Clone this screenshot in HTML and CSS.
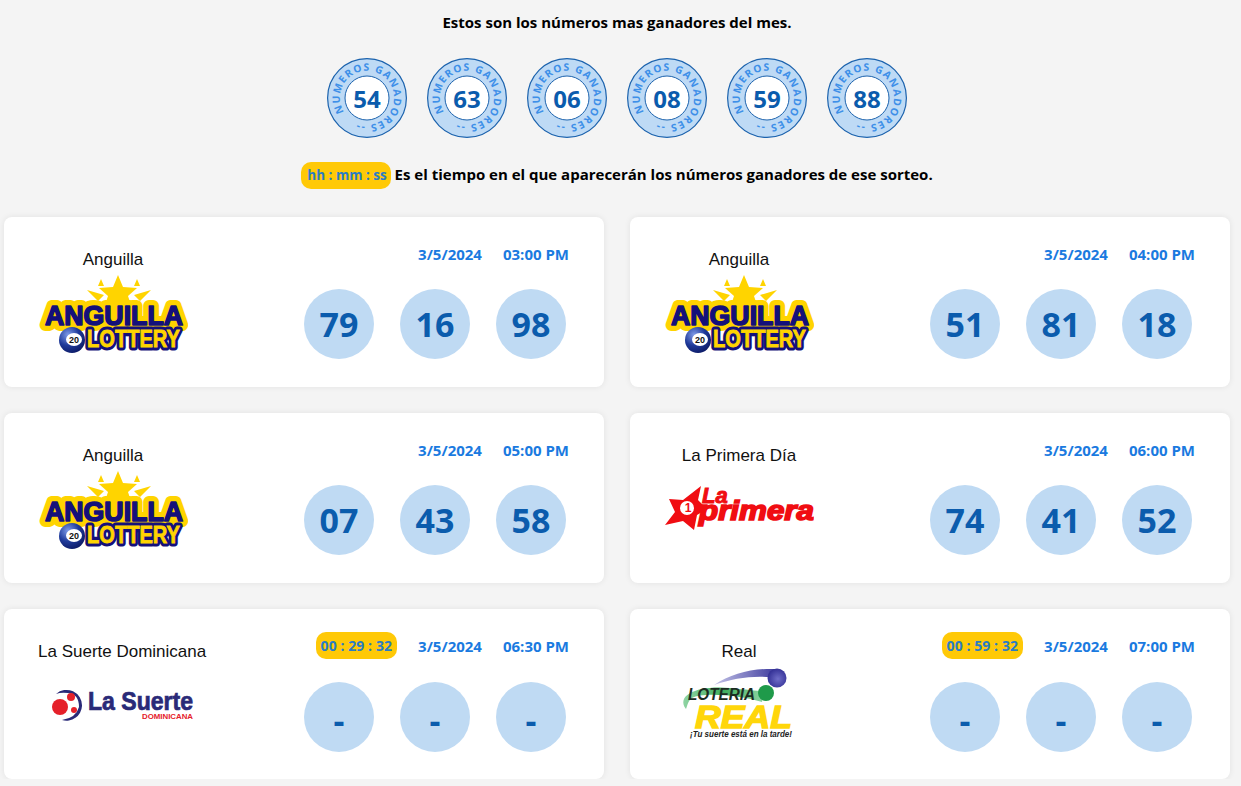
FILE: index.html
```html
<!DOCTYPE html>
<html lang="es">
<head>
    <meta charset="UTF-8">
    <meta name="viewport" content="width=device-width, initial-scale=1.0">
    <title>Números ganadores</title>
    <link rel="stylesheet" href="styles.css">
</head>
<body>
    <svg class="sprite" aria-hidden="true">
        <defs>
            <radialGradient id="ball-blue" cx="35%" cy="30%" r="75%">
                <stop offset="0" stop-color="#7f9be8"/>
                <stop offset="0.55" stop-color="#1f3a9a"/>
                <stop offset="1" stop-color="#0c1a66"/>
            </radialGradient>
            <radialGradient id="ball-real" cx="55%" cy="55%" r="60%">
                <stop offset="0" stop-color="#6f6dc8"/>
                <stop offset="1" stop-color="#2f2c92"/>
            </radialGradient>
            <linearGradient id="swoosh-blue" x1="0" x2="1" y1="0" y2="0">
                <stop offset="0" stop-color="#c4c4e8"/>
                <stop offset="1" stop-color="#37349a"/>
            </linearGradient>
            <linearGradient id="swoosh-green" x1="0" x2="1" y1="0" y2="0">
                <stop offset="0" stop-color="#8fd4a3"/>
                <stop offset="0.5" stop-color="#3fae5e"/>
                <stop offset="1" stop-color="#8fd4a3"/>
            </linearGradient>
            <path id="ring-path" d="M 17 54 A 27 27 0 1 1 21 59"/>
            <symbol id="seal" viewBox="0 0 80 80">
                <circle cx="40" cy="40" r="39.4" fill="#bedaf5" stroke="#1b62ad" stroke-width="1.2"/>
                <circle cx="40" cy="40" r="22" fill="#fff" stroke="#1b62ad" stroke-width="1"/>
                <text class="seal-text"><textPath href="#ring-path">NUMEROS GANADORES --</textPath></text>
            </symbol>
            <symbol id="logo-anguilla" viewBox="0 0 150 78">
                <path d="M80 0l5 12 14 1-9 8 3 9H67l3-9-9-8 14-1z" fill="#ffd400"/>
                <path d="M63 4l3 7h-6zM99 4l3 7h-6zM49 15l17 5-6 6zM113 15l-17 5 6 6z" fill="#ffd400"/>
                <text class="ang-back" x="7" y="50" textLength="138" lengthAdjust="spacingAndGlyphs">ANGUILLA</text>
                <text class="ang-big" x="7" y="50" textLength="138" lengthAdjust="spacingAndGlyphs">ANGUILLA</text>
                <text class="ang-small" x="49" y="72" textLength="93" lengthAdjust="spacingAndGlyphs">LOTTERY</text>
                <text class="ang-small-top" x="49" y="72" textLength="93" lengthAdjust="spacingAndGlyphs">LOTTERY</text>
                <circle cx="34" cy="65" r="13" fill="url(#ball-blue)"/>
                <ellipse cx="36" cy="64.5" rx="8" ry="6.5" fill="#fff"/>
                <text class="ang-ball" x="36" y="68">20</text>
            </symbol>
            <symbol id="logo-primera" viewBox="0 0 150 50">
                <path d="M37 1L34 15 43 24 33 30 30 45 19 36 1 40 11 27 5 14 19 15z" fill="#f00d12"/>
                <circle cx="23" cy="23" r="7" fill="#fff"/>
                <text class="pri-one" x="24" y="27">1</text>
                <text class="pri-la" x="38" y="18">La</text>
                <text class="pri-word" x="35" y="35" textLength="115" lengthAdjust="spacingAndGlyphs">primera</text>
            </symbol>
            <symbol id="logo-suerte" viewBox="0 0 150 46">
                <path d="M8 18A15.5 15.5 0 0 1 34 30 15.5 15.5 0 0 1 14 44Q28 42 31 31 31 18 20 17 13 16 8 18z" fill="#2a2a78"/>
                <circle cx="12" cy="31" r="8" fill="#e5202a"/>
                <circle cx="23" cy="21" r="4" fill="#e5202a"/>
                <circle cx="26" cy="34" r="3" fill="#e5202a"/>
                <text class="sue-word" x="40" y="34" textLength="105" lengthAdjust="spacingAndGlyphs">La Suerte</text>
                <text class="sue-sub" x="94" y="43" textLength="51" lengthAdjust="spacingAndGlyphs">DOMINICANA</text>
            </symbol>
            <symbol id="logo-real" viewBox="0 0 150 78">
                <path d="M50 18C68 6 90 1 113 2l2 9C93 8 72 10 50 18z" fill="url(#swoosh-blue)"/>
                <circle cx="113" cy="11" r="9.5" fill="url(#ball-real)"/>
                <path d="M22 42C11 27 36 18 66 21c16 2 26 2 34 4l-2 10C76 28 38 25 28 31c-4 3-4 6-6 11z" fill="url(#swoosh-green)"/>
                <circle cx="102" cy="26" r="8" fill="#1f9a4a"/>
                <text class="real-word" x="24" y="33" textLength="67" lengthAdjust="spacingAndGlyphs">LOTERIA</text>
                <text class="real-big" x="31" y="61" textLength="97" lengthAdjust="spacingAndGlyphs">REAL</text>
                <text class="real-sub" x="26" y="70" textLength="102" lengthAdjust="spacingAndGlyphs">¡Tu suerte está en la tarde!</text>
            </symbol>
        </defs>
    </svg>

    <div class="intro">
        <h1 class="intro-title">Estos son los números mas ganadores del mes.</h1>
        <div class="seals">
            <div class="seal"><svg class="seal-bg"><use href="#seal"/></svg><span class="seal-num">54</span></div>
            <div class="seal"><svg class="seal-bg"><use href="#seal"/></svg><span class="seal-num">63</span></div>
            <div class="seal"><svg class="seal-bg"><use href="#seal"/></svg><span class="seal-num">06</span></div>
            <div class="seal"><svg class="seal-bg"><use href="#seal"/></svg><span class="seal-num">08</span></div>
            <div class="seal"><svg class="seal-bg"><use href="#seal"/></svg><span class="seal-num">59</span></div>
            <div class="seal"><svg class="seal-bg"><use href="#seal"/></svg><span class="seal-num">88</span></div>
        </div>
        <p class="legend"><span class="chip chip-small">hh : mm : ss</span> Es el tiempo en el que aparecerán los números ganadores de ese sorteo.</p>
    </div>

    <div class="grid">
        <div class="card">
            <div class="brand">
                <div class="brand-name">Anguilla</div>
                <svg class="logo logo-anguilla"><use href="#logo-anguilla"/></svg>
            </div>
            <div class="draw">
                <div class="draw-head"><span class="stamp">3/5/2024</span><span class="stamp">03:00 PM</span></div>
                <div class="balls"><div class="ball">79</div><div class="ball">16</div><div class="ball">98</div></div>
            </div>
        </div>
        <div class="card">
            <div class="brand">
                <div class="brand-name">Anguilla</div>
                <svg class="logo logo-anguilla"><use href="#logo-anguilla"/></svg>
            </div>
            <div class="draw">
                <div class="draw-head"><span class="stamp">3/5/2024</span><span class="stamp">04:00 PM</span></div>
                <div class="balls"><div class="ball">51</div><div class="ball">81</div><div class="ball">18</div></div>
            </div>
        </div>
        <div class="card">
            <div class="brand">
                <div class="brand-name">Anguilla</div>
                <svg class="logo logo-anguilla"><use href="#logo-anguilla"/></svg>
            </div>
            <div class="draw">
                <div class="draw-head"><span class="stamp">3/5/2024</span><span class="stamp">05:00 PM</span></div>
                <div class="balls"><div class="ball">07</div><div class="ball">43</div><div class="ball">58</div></div>
            </div>
        </div>
        <div class="card">
            <div class="brand">
                <div class="brand-name">La Primera Día</div>
                <svg class="logo logo-primera"><use href="#logo-primera"/></svg>
            </div>
            <div class="draw">
                <div class="draw-head"><span class="stamp">3/5/2024</span><span class="stamp">06:00 PM</span></div>
                <div class="balls"><div class="ball">74</div><div class="ball">41</div><div class="ball">52</div></div>
            </div>
        </div>
        <div class="card">
            <div class="brand">
                <div class="brand-name">La Suerte Dominicana</div>
                <svg class="logo logo-suerte"><use href="#logo-suerte"/></svg>
            </div>
            <div class="draw">
                <div class="draw-head"><span class="chip">00 : 29 : 32</span><span class="stamp">3/5/2024</span><span class="stamp">06:30 PM</span></div>
                <div class="balls"><div class="ball ball-empty">-</div><div class="ball ball-empty">-</div><div class="ball ball-empty">-</div></div>
            </div>
        </div>
        <div class="card">
            <div class="brand">
                <div class="brand-name">Real</div>
                <svg class="logo logo-real"><use href="#logo-real"/></svg>
            </div>
            <div class="draw">
                <div class="draw-head"><span class="chip">00 : 59 : 32</span><span class="stamp">3/5/2024</span><span class="stamp">07:00 PM</span></div>
                <div class="balls"><div class="ball ball-empty">-</div><div class="ball ball-empty">-</div><div class="ball ball-empty">-</div></div>
            </div>
        </div>
    </div>
</body>
</html>
```

FILE: styles.css
```css
body {
    font-family: "Open Sans", "Noto Sans", sans-serif;
    background-color: #f4f4f4;
    margin: 0;
    padding: 0;
    overflow: hidden;
}
.sprite {
    position: absolute;
    width: 0;
    height: 0;
}

/* top block */
.intro {
    padding: 12px 11px 0 4px;
    text-align: center;
}
.intro-title {
    margin: 0;
    font-size: 15px;
    line-height: 20px;
    font-weight: 700;
    color: #000;
}
.seals {
    display: flex;
    justify-content: center;
    gap: 20px;
    margin-top: 26px;
}
.seal {
    position: relative;
    width: 80px;
    height: 80px;
}
.seal-bg {
    width: 80px;
    height: 80px;
    display: block;
}
.seal-text {
    font-family: "Open Sans", sans-serif;
    font-size: 10.3px;
    font-weight: 700;
    letter-spacing: 1.2px;
    fill: #3d8fe8;
}
.seal-num {
    position: absolute;
    inset: 0;
    display: flex;
    align-items: center;
    justify-content: center;
    font-size: 24px;
    font-weight: 700;
    color: #0b5cad;
}
.legend {
    margin: 23px 0 0;
    font-size: 15px;
    line-height: 27px;
    font-weight: 700;
    color: #000;
}
.chip {
    display: inline-block;
    height: 27px;
    line-height: 27px;
    padding: 0 5px;
    border-radius: 10px;
    background-color: #ffc907;
    color: #2a7cc4;
    font-weight: 700;
    font-size: 14px;
    letter-spacing: 0.08px;
    white-space: nowrap;
}
.chip-small {
    font-size: 13.5px;
    letter-spacing: 0;
    padding: 0 4px 0 6px;
}

/* cards */
.grid {
    display: grid;
    grid-template-columns: 1fr 1fr;
    gap: 26px;
    padding: 28px 11px 0 4px;
}
.card {
    display: flex;
    justify-content: space-between;
    height: 170px;
    box-sizing: border-box;
    padding: 23px 35px 0 34px;
    background-color: #fff;
    border-radius: 8px;
    box-shadow: 0 0 6px rgba(0, 0, 0, 0.08);
}
.brand {
    width: 150px;
    display: flex;
    flex-direction: column;
}
.brand-name {
    margin-top: 10px;
    font-family: "Liberation Sans", Arial, sans-serif;
    font-size: 17px;
    line-height: 20px;
    color: #111;
    text-align: center;
    white-space: nowrap;
}
.logo {
    display: block;
    width: 150px;
    margin-top: 5px;
}
.logo-anguilla {
    height: 78px;
}
.logo-primera {
    height: 50px;
    margin-top: 19px;
}
.logo-suerte {
    height: 46px;
    margin-top: 14px;
    margin-left: 10px;
}
.logo-real {
    height: 78px;
}
.draw {
    display: flex;
    flex-direction: column;
    align-items: flex-end;
}
.draw-head {
    display: flex;
    align-items: center;
    gap: 21px;
    min-height: 26px;
    font-size: 15px;
    font-weight: 700;
    color: #1a7ae0;
}
.stamp {
    padding-top: 1px;
}
.balls {
    display: flex;
    gap: 26px;
    margin-top: 23px;
    margin-right: 3px;
}
.ball {
    width: 70px;
    height: 70px;
    border-radius: 50%;
    background-color: #bfdaf3;
    color: #0b5cad;
    font-size: 34px;
    font-weight: 700;
    display: flex;
    align-items: center;
    justify-content: center;
}
.ball-empty {
    box-sizing: border-box;
    padding-top: 6px;
}

/* logo text */
.ang-back {
    font: 700 27px "Liberation Sans", sans-serif;
    fill: #ffd400;
    stroke: #ffd400;
    stroke-width: 12px;
    stroke-linejoin: round;
}
.ang-big {
    font: 700 27px "Liberation Sans", sans-serif;
    fill: #14107a;
    stroke: #14107a;
    stroke-width: 1.6px;
    stroke-linejoin: round;
}
.ang-small {
    font: 700 23px "Liberation Sans", sans-serif;
    fill: #14107a;
    stroke: #14107a;
    stroke-width: 7px;
    stroke-linejoin: round;
}
.ang-small-top {
    font: 700 23px "Liberation Sans", sans-serif;
    fill: #ffd400;
    stroke: #ffd400;
    stroke-width: 0.8px;
}
.ang-ball {
    font: 700 9px "Liberation Sans", sans-serif;
    fill: #111;
    text-anchor: middle;
}
.pri-one {
    font: 700 12px "Liberation Sans", sans-serif;
    fill: #f00d12;
    text-anchor: middle;
}
.pri-la {
    font: italic 700 22px "Liberation Sans", sans-serif;
    fill: #f00d12;
    stroke: #f00d12;
    stroke-width: 1px;
}
.pri-word {
    font: italic 700 27px "Liberation Sans", sans-serif;
    fill: #f00d12;
    stroke: #f00d12;
    stroke-width: 1.6px;
}
.sue-word {
    font: 700 25px "Liberation Sans", sans-serif;
    fill: #2a2a78;
    stroke: #2a2a78;
    stroke-width: 0.7px;
}
.sue-sub {
    font: 700 7px "Liberation Sans", sans-serif;
    fill: #e5202a;
}
.real-word {
    font: italic 700 16px "Liberation Sans", sans-serif;
    fill: #1c2c22;
}
.real-big {
    font: italic 700 32px "Liberation Sans", sans-serif;
    fill: #ffd60a;
    stroke: #ffd60a;
    stroke-width: 1.4px;
}
.real-sub {
    font: italic 700 9px "Liberation Sans", sans-serif;
    fill: #222;
}
```
